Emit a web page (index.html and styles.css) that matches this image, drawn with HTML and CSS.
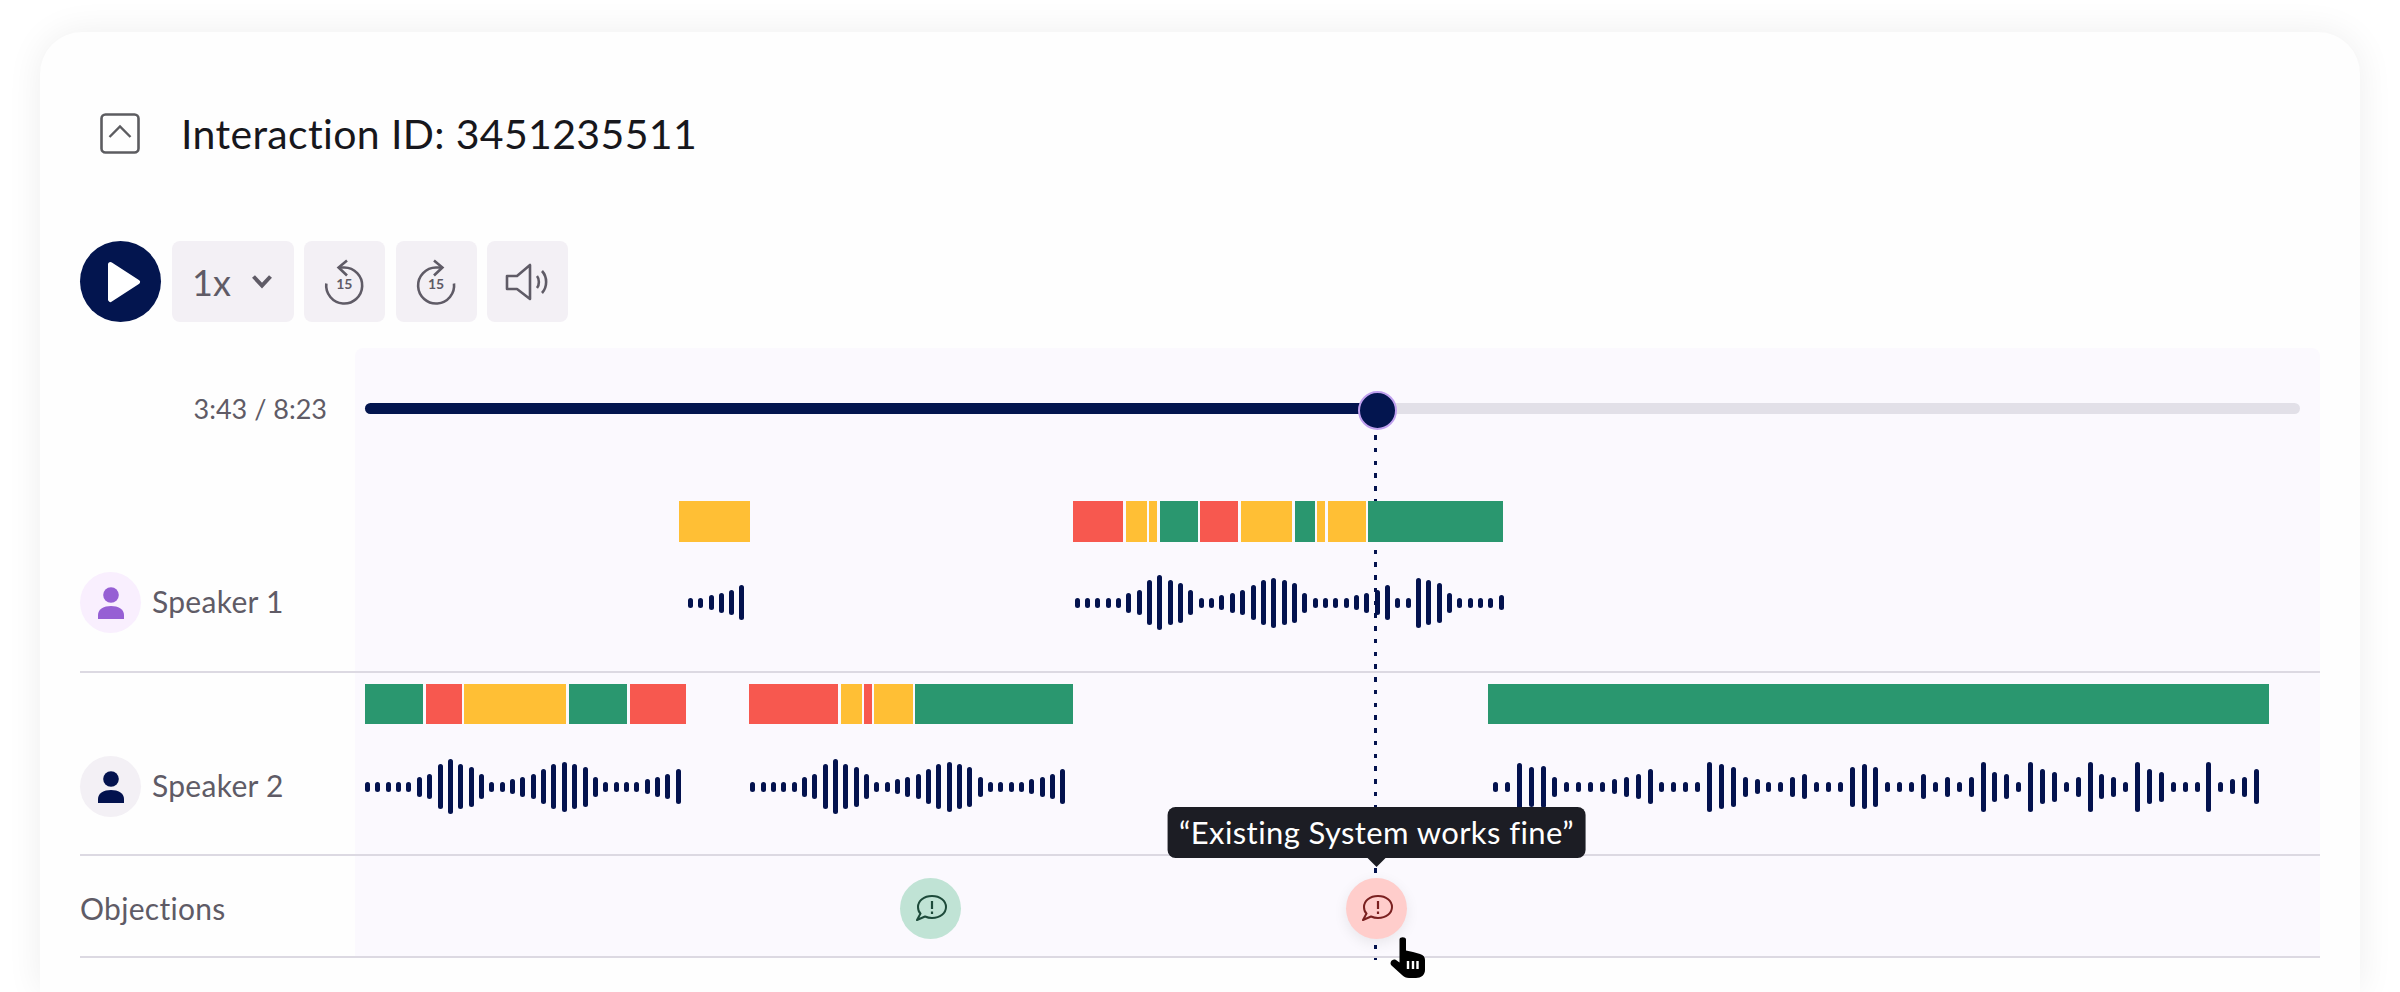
FILE: index.html

```html
<!DOCTYPE html>
<html lang="en">
<head>
<meta charset="utf-8"/>
<title>Interaction 3451235511</title>
<meta content="width=device-width, initial-scale=1.0" name="viewport"/>
<link rel="stylesheet" href="styles.css">
</head>
<body>
<main class="card">
<header class="card-head">
<button class="toggle" type="button" aria-label="Collapse">
<svg width="40" height="41" viewBox="0 0 40 41"><rect x="1.5" y="1.5" width="37" height="38" rx="4" fill="none" stroke="#5c5c60" stroke-width="2.6"/><path d="M9.5 24 L20 13.5 L30.500 24" fill="none" stroke="#5c5c60" stroke-width="2.4"/></svg>
</button>
<h1>Interaction ID: 3451235511</h1>
</header>

<div class="controls">
<button class="play" type="button" aria-label="Play">
<svg width="34" height="42" viewBox="0 0 34 42"><path d="M3.500 3.500 L30.500 21 L3.500 38.500 Z" fill="#fff" stroke="#fff" stroke-width="5" stroke-linejoin="round"/></svg>
</button>
<button class="ctl ctl-speed" type="button">
<span>1x</span>
<svg width="22" height="15" viewBox="0 0 22 15"><path d="M2.500 2.500 L11 11.500 L19.500 2.500" fill="none" stroke="#5f5b66" stroke-width="4"/></svg>
</button>
<button class="ctl" type="button" aria-label="Back 15 seconds">
<svg width="48" height="48" viewBox="0 0 48 48"><path d="M18 9.500 H23.300 A18 18 0 1 1 5.300 25.500" fill="none" stroke="#5f5b66" stroke-width="2.600"/><path d="M26 2.500 L17.600 9.500 L26 17.500" fill="none" stroke="#5f5b66" stroke-width="2.600"/><text x="23.300" y="31" text-anchor="middle" class="skip-num">15</text></svg>
</button>
<button class="ctl" type="button" aria-label="Forward 15 seconds">
<svg width="48" height="48" viewBox="0 0 48 48"><path d="M30 9.500 H24 A18 18 0 1 0 42 25.500" fill="none" stroke="#5f5b66" stroke-width="2.600"/><path d="M22 2.500 L30.400 9.500 L22 17.500" fill="none" stroke="#5f5b66" stroke-width="2.600"/><text x="24" y="31" text-anchor="middle" class="skip-num">15</text></svg>
</button>
<button class="ctl" type="button" aria-label="Volume">
<svg width="46" height="40" viewBox="0 0 46 40"><path d="M2 14 H12 L25 3 V37 L12 27 H2 Z" fill="none" stroke="#5f5b66" stroke-width="2.600" stroke-linejoin="round"/><path d="M32 14 C34.500 17 34.500 23 32 26" fill="none" stroke="#5f5b66" stroke-width="2.600"/><path d="M37 9 C42.500 15 42.500 25 37 31" fill="none" stroke="#5f5b66" stroke-width="2.600"/></svg>
</button>
</div>

<section class="timeline">
<div class="playhead"></div>

<div class="row row-time">
<div class="time">3:43 / 8:23</div>
<div class="progress"><div class="progress-fill" style="width: 1014px"></div></div>
</div>

<div class="row row-speaker1">
<div class="who">
<span class="avatar avatar-purple"><svg width="28" height="32" viewBox="0 0 28 32"><circle cx="14" cy="8" r="7.800" fill="#965fd4"/><path d="M1 32 V28 C1 22 7 19 14 19 C21 19 27 22 27 28 V32 Z" fill="#965fd4"/></svg></span>
<span class="who-name">Speaker 1</span>
</div>
<div class="track">
<div class="segments" id="segs1"></div>
<div class="wave" id="wave1"></div>
</div>
</div>

<div class="row row-speaker2">
<div class="who">
<span class="avatar"><svg width="28" height="32" viewBox="0 0 28 32"><circle cx="14" cy="8" r="7.800" fill="#03124e"/><path d="M1 32 V28 C1 22 7 19 14 19 C21 19 27 22 27 28 V32 Z" fill="#03124e"/></svg></span>
<span class="who-name">Speaker 2</span>
</div>
<div class="track">
<div class="segments" id="segs2"></div>
<div class="wave" id="wave2"></div>
</div>
</div>

<div class="row row-objections">
<div class="who">Objections</div>
<div class="markers">
<span class="marker marker-ok" style="margin-left: 545px">
<svg width="32" height="26" viewBox="0 0 32 26"><path d="M17 1 C25.300 1 31 6 31 12 C31 18 25.300 23 17 23 C14.500 23 12.300 22.500 10 21.500 L2 25 L5.500 18.500 C3.500 16.800 3 14.500 3 12 C3 6 8.700 1 17 1 Z" fill="none" stroke="#1d4a3a" stroke-width="2" stroke-linejoin="round"/><path d="M17 6 V14 M17 16.500 V19" stroke="#1d4a3a" stroke-width="2.200" fill="none"/></svg>
</span>
<span class="marker marker-bad" style="margin-left: 385px">
<span class="tooltip">“Existing System works fine”</span>
<svg width="32" height="26" viewBox="0 0 32 26"><path d="M17 1 C25.300 1 31 6 31 12 C31 18 25.300 23 17 23 C14.500 23 12.300 22.500 10 21.500 L2 25 L5.500 18.500 C3.500 16.800 3 14.500 3 12 C3 6 8.700 1 17 1 Z" fill="none" stroke="#7a2020" stroke-width="2" stroke-linejoin="round"/><path d="M17 6 V14 M17 16.500 V19" stroke="#7a2020" stroke-width="2.200" fill="none"/></svg>
<svg class="pointer" width="40" height="44" viewBox="0 0 40 44"><path d="M11.500 3.500 C11.500 0.500 18 0.500 18 3.500 V14.500 L25 16 L32 18 C35.500 19 37 21 37 24 V34 C37 39 33 42 28 42 H21 C18 42 16 41 14 39 L3.500 29.500 C1 27 4 22 8 24 L11.500 26.500 Z" fill="#000"/><path d="M20 25 V33 M25 25 V33 M29.500 25 V33" stroke="#fff" stroke-width="2.400"/></svg>
</span>
</div>
</div>
</section>
</main>
<script src="script.js"></script>
</body>
</html>
```

FILE: styles.css

```css
* { box-sizing: border-box; }
body {
    margin: 0;
    height: 992px;
    overflow: hidden;
    padding: 32px 40px 0;
    background: #fff;
    color: #5f5b66;
    font-family: "Lato", "Noto Sans", sans-serif;
}
button {
    border: 0;
    padding: 0;
    background: none;
    font: inherit;
    color: inherit;
}
.card {
    height: 960px;
    padding: 81px 40px 0;
    background: #fefefe;
    border-radius: 42px 42px 0 0;
    box-shadow: 0 0 36px rgba(0,0,0,0.07);
}

.card-head {
    display: flex;
    align-items: center;
    gap: 41px;
    height: 41px;
    padding-left: 20px;
}
.toggle { display: flex; }
.card-head h1 {
    margin: 0;
    font-size: 41px;
    font-weight: 400;
    letter-spacing: 0.35px;
    color: #17171c;
}

.controls {
    display: flex;
    gap: 10.500px;
    margin-top: 87px;
}
.play {
    display: flex;
    align-items: center;
    justify-content: center;
    width: 81px;
    height: 81px;
    padding-left: 7px;
    border-radius: 50%;
    background: #03154f;
}
.ctl {
    display: flex;
    align-items: center;
    justify-content: center;
    width: 81px;
    height: 81px;
    border-radius: 8px;
    background: #f3f0f5;
}
.ctl-speed {
    width: 122px;
    gap: 20px;
    font-size: 36px;
}
.skip-num {
    font-size: 14px;
    font-weight: 700;
    fill: #5f5b66;
}

.timeline {
    position: relative;
    margin-top: 26px;
}
.timeline::before {
    content: "";
    position: absolute;
    top: 0;
    bottom: 0;
    left: 275px;
    right: 0;
    background: #fbf9fe;
    border-radius: 8px 8px 0 0;
}
.playhead {
    position: absolute;
    z-index: 1;
    left: 1294px;
    top: 86.500px;
    height: 525px;
    width: 3px;
    background: repeating-linear-gradient(#03124e 0 4.500px, transparent 4.500px 12.750px);
}

.row {
    position: relative;
    display: grid;
    grid-template-columns: 275px 1fr;
}
.row-time {
    align-items: center;
    height: 132px;
    padding: 44px 0 56px;
}
.time {
    padding-right: 28px;
    text-align: right;
    font-size: 27px;
}
.progress {
    position: relative;
    height: 11px;
    margin: 0 20px 0 10px;
    border-radius: 6px;
    background: #e2e0e8;
}
.progress-fill {
    position: relative;
    height: 100%;
    border-radius: 6px;
    background: #03154f;
}
.progress-fill::after {
    content: "";
    position: absolute;
    right: -18px;
    top: -12px;
    width: 35px;
    height: 35px;
    border: 2px solid #bfa0ee;
    border-radius: 50%;
    background: #03154f;
}

.row-speaker1, .row-speaker2, .row-objections { border-bottom: 2px solid #dcd9e2; }
.row-speaker1 { padding: 21px 0 38px; align-items: end; }
.row-speaker2 { padding: 11px 0 37px; align-items: end; }
.row-objections { height: 102px; padding-top: 4px; align-items: center; }

.who {
    display: flex;
    align-items: center;
    gap: 11px;
    font-size: 30px;
    letter-spacing: 0.3px;
}
.who-name { margin-bottom: 3px; }
.avatar {
    display: flex;
    align-items: center;
    justify-content: center;
    width: 61px;
    height: 61px;
    border-radius: 50%;
    background: #f3f0f5;
}
.avatar-purple { background: #f9effe; }

.segments {
    position: relative;
    z-index: 2;
    display: flex;
    height: 41px;
}
.row-speaker2 .segments { height: 40px; }
.seg { flex: none; }
.seg-red { background: #f7584f; }
.seg-yellow { background: #ffbf35; }
.seg-green { background: #2a976f; }

.wave {
    display: flex;
    align-items: center;
    height: 61px;
    margin-top: 30px;
}
.row-speaker2 .wave { margin-top: 32px; }
.wave-group {
    display: flex;
    flex: none;
    align-items: center;
}
.bar {
    flex: none;
    width: 5px;
    border-radius: 3px;
    background: #03124e;
}

.markers {
    display: flex;
    align-items: center;
}
.marker {
    position: relative;
    z-index: 3;
    display: flex;
    flex: none;
    align-items: center;
    justify-content: center;
    width: 61px;
    height: 61px;
    border-radius: 50%;
}
.marker-ok { background: #c0e3d5; }
.marker-bad {
    background: #ffcdcb;
    box-shadow: 0 4px 14px rgba(0,0,0,0.08);
}
.tooltip {
    position: absolute;
    bottom: 81px;
    left: 50%;
    transform: translateX(-50%);
    padding: 8px 12px;
    border-radius: 8px;
    background: #1c1d24;
    color: #fff;
    font-size: 31px;
    line-height: 35px;
    letter-spacing: 0.4px;
    white-space: nowrap;
}
.tooltip::after {
    content: "";
    position: absolute;
    left: 50%;
    top: 100%;
    margin-left: -9px;
    border: 9px solid transparent;
    border-bottom: 0;
    border-top-color: #1c1d24;
}
.pointer {
    position: absolute;
    left: 42px;
    top: 58px;
}
```

FILE: script.js

```js
// x positions are in page pixels of the recording, the track starts at 355
var TRACK_X = 354.5;

var segs1 = [
    ['yellow', 678, 749],
    ['red', 1072.3, 1123], ['yellow', 1126, 1146.7], ['yellow', 1149, 1157],
    ['green', 1159.3, 1197.3], ['red', 1200, 1238], ['yellow', 1240.7, 1291.7],
    ['green', 1294.3, 1314.7], ['yellow', 1317, 1325], ['yellow', 1327.3, 1365.3],
    ['green', 1368, 1503]
];
var segs2 = [
    ['green', 364.6, 423], ['red', 425.8, 461.5], ['yellow', 464, 566],
    ['green', 568.7, 627], ['red', 629.4, 685.5],
    ['red', 749, 838], ['yellow', 841, 861.4], ['red', 864, 871.8],
    ['yellow', 874, 912.5], ['green', 915, 1072.5],
    ['green', 1487.6, 2269]
];

var hump = [10,10,10,10,10,20,25,45,55,45,40,25,10,10,15,20,25,35,45,50,45,40,20,10,10,10,10,15,20,25,35];
var wave1 = [
    { x: 690, step: 10.3, h: [10,10,15,20,25,35] },
    { x: 1076.7, step: 10.35, h: [10,10,10,10,10,20,25,45,55,45,40,25,10,10,15,20,25,35,45,50,45,40,20,10,10,10,10,15,20,25,35,10,10,50,45,40,20,10,10,10,10,15] }
];
var wave2 = [
    { x: 367, step: 10.37, h: hump },
    { x: 752.5, step: 10.35, h: hump },
    { x: 1495.5, step: 11.9, h: [10,10,47,40,42,20,10,10,10,10,15,20,25,35,10,10,10,10,50,45,40,20,15,10,10,20,25,10,10,10,40,45,40,10,10,10,25,10,20,10,20,50,30,25,10,50,35,30,10,20,50,25,20,10,50,35,30,10,10,10,50,10,15,20,35] }
];

function renderSegs(id, list) {
    var box = document.getElementById(id);
    var end = TRACK_X;
    list.forEach(function (s) {
        var el = document.createElement('div');
        el.className = 'seg seg-' + s[0];
        el.style.marginLeft = (s[1] - end) + 'px';
        el.style.width = (s[2] - s[1]) + 'px';
        box.appendChild(el);
        end = s[2];
    });
}

function renderWave(id, groups) {
    var box = document.getElementById(id);
    var end = TRACK_X;
    groups.forEach(function (g) {
        var group = document.createElement('div');
        group.className = 'wave-group';
        group.style.marginLeft = (g.x - 2.5 - end) + 'px';
        group.style.gap = (g.step - 5) + 'px';
        g.h.forEach(function (h) {
            var bar = document.createElement('div');
            bar.className = 'bar';
            bar.style.height = h + 'px';
            group.appendChild(bar);
        });
        box.appendChild(group);
        end = g.x + 2.5 + (g.h.length - 1) * g.step;
    });
}

renderSegs('segs1', segs1);
renderSegs('segs2', segs2);
renderWave('wave1', wave1);
renderWave('wave2', wave2);
```
